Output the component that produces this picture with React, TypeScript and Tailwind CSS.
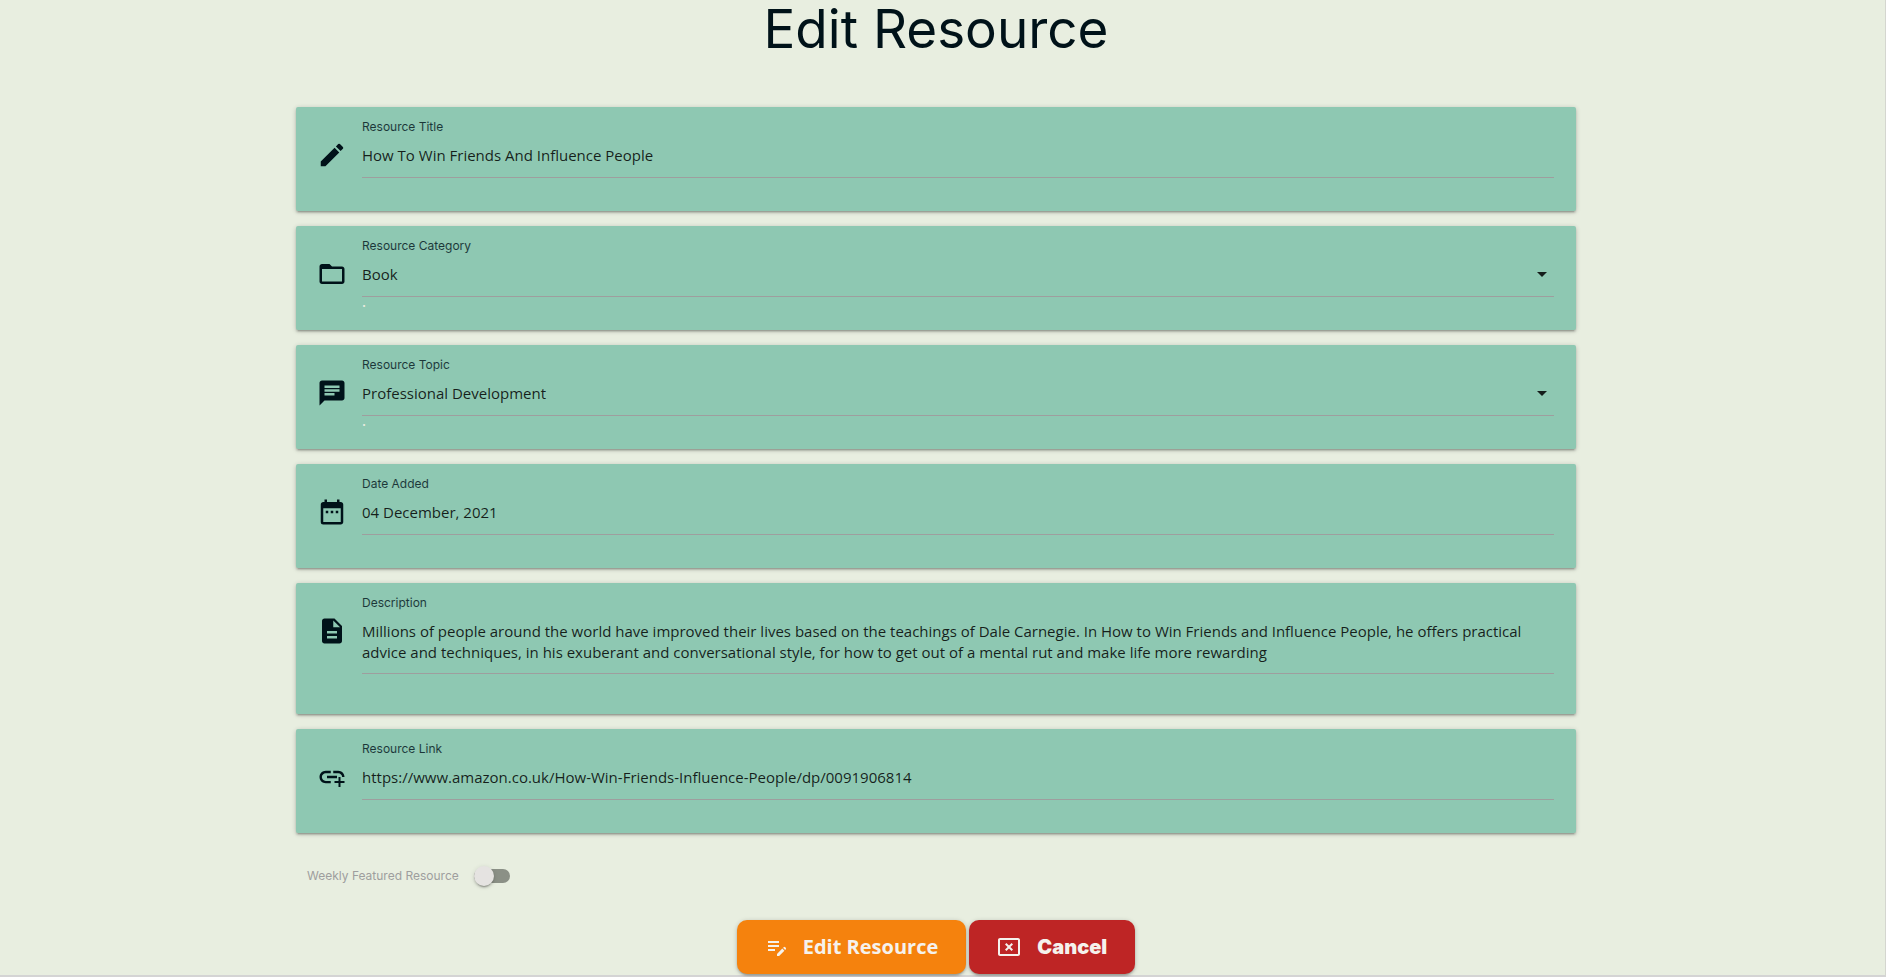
import { useState } from 'react'
import type { ComponentType, ReactNode, SVGProps } from 'react'
import {
  MdArrowDropDown,
  MdCancelPresentation,
  MdChat,
  MdDateRange,
  MdDescription,
  MdEdit,
  MdEditNote,
  MdFolderOpen,
} from 'react-icons/md'

const control =
  "block w-full appearance-none rounded-none border-b border-[#9e9e9e] bg-transparent font-['Open_Sans','Noto_Sans',sans-serif] text-[15px] text-black/85 outline-none"

function AddLinkIcon(props: SVGProps<SVGSVGElement>) {
  return (
    <svg viewBox="0 0 24 24" fill="currentColor" {...props}>
      <path d="M8 11h8v2H8zM20.1 12H22c0-2.76-2.24-5-5-5h-4v1.9h4c1.71 0 3.1 1.39 3.1 3.1zM3.9 12c0-1.71 1.39-3.1 3.1-3.1h4V7H7c-2.76 0-5 2.24-5 5s2.24 5 5 5h4v-1.9H7c-1.71 0-3.1-1.39-3.1-3.1z" />
      <path d="M18.8 12h-1.6v3.2H14v1.6h3.2V20h1.6v-3.2H22v-1.6h-3.2z" />
    </svg>
  )
}

type FieldProps = {
  id: string
  label: string
  icon: ComponentType<{ className?: string }>
  helper?: string
  tall?: boolean
  children: ReactNode
}

function Field({ id, label, icon: Icon, helper, tall, children }: FieldProps) {
  return (
    <div
      className={`flex gap-[15px] rounded-[2px] bg-[#8ec8b2] pt-3 pr-[22px] pl-[21px] shadow-[0_2px_2px_0_rgba(0,0,0,0.14),0_3px_1px_-2px_rgba(0,0,0,0.12),0_1px_5px_0_rgba(0,0,0,0.2)] ${
        tall ? 'pb-[26px]' : 'pb-[19px]'
      }`}
    >
      <Icon aria-hidden="true" className="mt-[21px] size-[30px] shrink-0 text-[#001219]" />
      <div className="min-w-0 flex-1">
        <label htmlFor={id} className="block text-xs leading-4 text-[#001219]/80">
          {label}
        </label>
        {children}
        <span className="block h-3.5 text-xs leading-3 font-bold text-[#e9ecdf]">{helper}</span>
      </div>
    </div>
  )
}

type SelectProps = { id: string; options: string[] }

function Select({ id, options }: SelectProps) {
  return (
    <div className="relative">
      <select id={id} className={`${control} h-[43px] pr-8 pb-0.5`}>
        {options.map((option) => (
          <option key={option}>{option}</option>
        ))}
      </select>
      <MdArrowDropDown aria-hidden="true" className="pointer-events-none absolute top-2 right-0 size-6 text-black/85" />
    </div>
  )
}

export default function App() {
  const [featured, setFeatured] = useState(false)

  return (
    <div className="min-h-screen border-r border-b-2 border-r-[#d4d6cf] border-b-[#d4d4d4] bg-[#e8eee0] pr-[13px] font-[Inter,Roboto,sans-serif] text-[#001219]">
      <main className="mx-auto max-w-[1280px]">
        <h1 className="text-center text-[53px] leading-[58px] font-normal">Edit Resource</h1>
        <form className="mt-[49px]" onSubmit={(e) => e.preventDefault()}>
          <div className="flex flex-col gap-[15px]">
            <Field id="title" label="Resource Title" icon={MdEdit}>
              <input id="title" type="text" className={`${control} h-[43px] pb-0.5`} defaultValue="How To Win Friends And Influence People" />
            </Field>
            <Field id="category" label="Resource Category" icon={MdFolderOpen} helper=".">
              <Select id="category" options={['Book']} />
            </Field>
            <Field id="topic" label="Resource Topic" icon={MdChat} helper=".">
              <Select id="topic" options={['Professional Development']} />
            </Field>
            <Field id="date" label="Date Added" icon={MdDateRange}>
              <input id="date" type="text" className={`${control} h-[43px] pb-0.5`} defaultValue="04 December, 2021" />
            </Field>
            <Field id="description" label="Description" icon={MdDescription} tall>
              <textarea
                id="description"
                rows={2}
                className={`${control} resize-none overflow-hidden pt-2.5 pb-2.5 leading-[21px]`}
                defaultValue="Millions of people around the world have improved their lives based on the teachings of Dale Carnegie. In How to Win Friends and Influence People, he offers practical advice and techniques, in his exuberant and conversational style, for how to get out of a mental rut and make life more rewarding"
              />
            </Field>
            <Field id="link" label="Resource Link" icon={AddLinkIcon}>
              <input id="link" type="text" className={`${control} h-[43px] pb-0.5`} defaultValue="https://www.amazon.co.uk/How-Win-Friends-Influence-People/dp/0091906814" />
            </Field>
          </div>

          <label className="mt-[33px] ml-[11px] flex w-fit items-center gap-[15px] text-xs leading-5 text-[#9e9e9e]">
            Weekly Featured Resource
            <span className="relative flex h-5 w-9 items-center">
              <input
                type="checkbox"
                role="switch"
                className="peer sr-only"
                checked={featured}
                onChange={(e) => setFeatured(e.target.checked)}
              />
              <span className="h-3.5 w-9 rounded-full bg-[#8b9086] peer-checked:bg-[#84c7c1]" />
              <span className="absolute top-0 left-0 size-5 rounded-full bg-[#e5e3e1] shadow-[0_3px_1px_-2px_rgba(0,0,0,0.2),0_2px_2px_0_rgba(0,0,0,0.14),0_1px_5px_0_rgba(0,0,0,0.12)] peer-checked:left-4" />
            </span>
          </label>

          <div className="mt-[34px] flex justify-center gap-[3px] text-xl text-[#f5f2ed]">
            <button
              type="submit"
              className="flex h-[54px] items-center gap-3.5 rounded-[10px] bg-[#f5820d] px-7 font-['Open_Sans','Noto_Sans',sans-serif] font-bold shadow-[0_2px_2px_0_rgba(0,0,0,0.14),0_3px_1px_-2px_rgba(0,0,0,0.12),0_1px_5px_0_rgba(0,0,0,0.2)]"
            >
              <MdEditNote aria-hidden="true" className="size-6" />
              Edit Resource
            </button>
            <button
              type="button"
              className="flex h-[54px] items-center gap-4 rounded-[10px] bg-[#be2525] px-7 font-black shadow-[0_2px_2px_0_rgba(0,0,0,0.14),0_3px_1px_-2px_rgba(0,0,0,0.12),0_1px_5px_0_rgba(0,0,0,0.2)]"
            >
              <MdCancelPresentation aria-hidden="true" className="size-6" />
              Cancel
            </button>
          </div>
        </form>
      </main>
    </div>
  )
}
